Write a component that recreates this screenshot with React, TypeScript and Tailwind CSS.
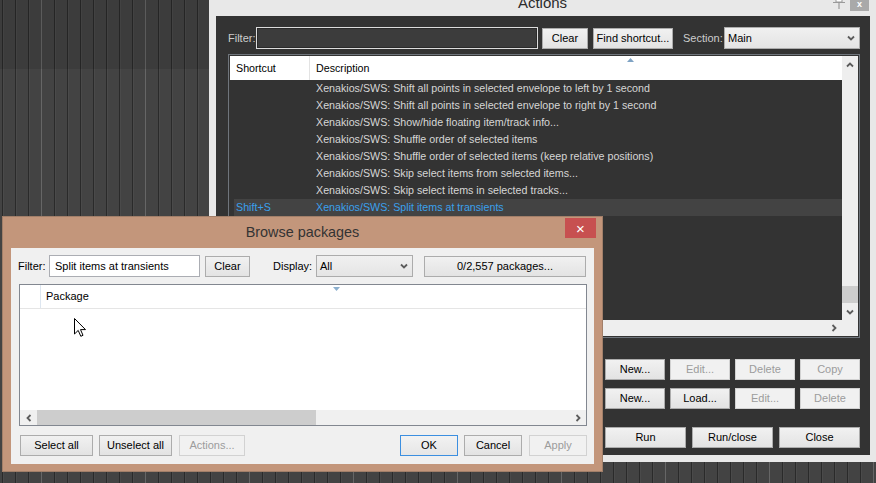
import React from 'react';

// Two overlapping windows over a REAPER arrange view: "Actions" (dark) and "Browse packages".

const columns = Array.from({ length: 68 }, (_, i) => i);

const actionRows = [
    { key: '', text: 'Xenakios/SWS: Shift all points in selected envelope to left by 1 second' },
    { key: '', text: 'Xenakios/SWS: Shift all points in selected envelope to right by 1 second' },
    { key: '', text: 'Xenakios/SWS: Show/hide floating item/track info...' },
    { key: '', text: 'Xenakios/SWS: Shuffle order of selected items' },
    { key: '', text: 'Xenakios/SWS: Shuffle order of selected items (keep relative positions)' },
    { key: '', text: 'Xenakios/SWS: Skip select items from selected items...' },
    { key: '', text: 'Xenakios/SWS: Skip select items in selected tracks...' },
    { key: 'Shift+S', text: 'Xenakios/SWS: Split items at transients', selected: true },
];

function Chevron({ dir }: { dir: 'up' | 'down' | 'left' | 'right' }) {
    const d = {
        up: 'M1 5.5 L4 2.5 L7 5.5',
        down: 'M1 2.5 L4 5.5 L7 2.5',
        left: 'M5.5 1 L2.5 4 L5.5 7',
        right: 'M2.5 1 L5.5 4 L2.5 7',
    }[dir];
    return (
        <svg width="8" height="8" viewBox="0 0 8 8">
            <path d={d} fill="none" stroke="#5c5c5c" strokeWidth="1.8" />
        </svg>
    );
}

function Btn({
    label,
    className = '',
    disabled,
    focus,
}: {
    label: string;
    className?: string;
    disabled?: boolean;
    focus?: boolean;
}) {
    const look = disabled
        ? 'border-[#d2d2d2] bg-[#f1f1f1] text-[#9c9c9c]'
        : focus
          ? 'border-[#3c8fe0] bg-linear-to-b from-[#f2f2f2] to-[#e6e6e6] text-black'
          : 'border-[#acacac] bg-linear-to-b from-[#f1f1f1] to-[#e3e3e3] text-black';
    return (
        <div className={`flex h-[21px] shrink-0 items-center justify-center border text-[11px] ${look} ${className}`}>
            {label}
        </div>
    );
}

function Arrange() {
    return (
        <div className="absolute inset-0 flex pl-[2px]">
            {columns.map((i) => (
                <div
                    key={i}
                    className={
                        i % 8 === 3
                            ? 'h-full w-[13px] shrink-0 border-l border-[#666666]'
                            : 'h-full w-[13px] shrink-0 border-l border-[#2a2a2a] shadow-[inset_1px_0_0_#4a4a4a]'
                    }
                />
            ))}
            <div className="absolute left-0 top-0 h-[69px] w-full bg-black/10" />
        </div>
    );
}

function ActionsWindow() {
    return (
        <div className="absolute left-[209px] top-0 flex h-[462px] w-[667px] flex-col bg-[#e8e8e8]">
            {/* ─── Title strip (mostly off screen) ─── */}
            <div className="relative h-[16px] shrink-0">
                <div className="absolute left-0 top-[-5px] w-full text-center text-[15px] leading-[15px] text-[#2b2b2b]">
                    Actions
                </div>
                <svg className="absolute left-[623px] top-0" width="14" height="10" viewBox="0 0 14 10">
                    <rect x="4" y="-3" width="6" height="5" fill="#ffffff" stroke="#9a9a9a" />
                    <line x1="1" y1="2.5" x2="13" y2="2.5" stroke="#9a9a9a" strokeWidth="1" />
                    <line x1="7" y1="2.5" x2="7" y2="9" stroke="#8a8a8a" strokeWidth="1" />
                </svg>
                <div className="absolute left-[641px] top-0 flex h-[11px] w-[19px] items-start justify-center bg-[#a9a9a9] text-[9px] leading-[8px] font-bold text-white">
                    x
                </div>
            </div>

            {/* ─── Dark client ─── */}
            <div className="mb-[7px] ml-[7px] mr-[6px] flex flex-1 flex-col bg-[#333333] pl-[12px] pr-[10px] pt-[11px]">
                <div className="flex h-[22px] items-end text-[11px]">
                    <span className="w-[28px] self-center text-[#cdcdcd]">Filter:</span>
                    <div className="h-[22px] w-[282px] border border-[#dcdcdc] bg-[#3c3c3c] shadow-[inset_0_0_0_1px_#2a2a2a]" />
                    <Btn label="Clear" className="ml-[4px] w-[46px]" />
                    <Btn label="Find shortcut..." className="ml-[5px] w-[80px]" />
                    <span className="ml-[10px] w-[41px] self-center text-[#cdcdcd]">Section:</span>
                    <div className="flex h-[22px] w-[136px] items-center justify-between border border-[#acacac] bg-linear-to-b from-[#f0f0f0] to-[#e4e4e4] pl-[3px] pr-[4px] text-black">
                        <span>Main</span>
                        <Chevron dir="down" />
                    </div>
                </div>

                {/* list */}
                <div className="mt-[5px] flex h-[284px] w-[632px] border border-[#6f757c] p-px">
                    <div className="flex w-[612px] flex-col">
                        <div className="relative flex h-[24px] shrink-0 bg-white text-[10.7px] text-black">
                            <div className="flex w-[80px] items-center border-r border-[#e3e3e3] pl-[6px]">Shortcut</div>
                            <div className="flex flex-1 items-center pl-[6px]">Description</div>
                            <svg className="absolute left-[397px] top-[2px]" width="7" height="4" viewBox="0 0 7 4">
                                <path d="M0 4 L3.5 0 L7 4 Z" fill="#7fa3c4" />
                            </svg>
                        </div>
                        {actionRows.map((r) => (
                            <div
                                key={r.text}
                                className={
                                    r.selected
                                        ? 'ml-[4px] flex h-[17px] items-center bg-[#434343] text-[10.7px] text-[#3aa0ec]'
                                        : 'ml-[4px] flex h-[17px] items-center text-[10.7px] text-[#d6d6d6]'
                                }
                            >
                                <span className="w-[82px] pl-[2px]">{r.key}</span>
                                <span className="whitespace-nowrap">{r.text}</span>
                            </div>
                        ))}
                        <div className="flex-1" />
                        <div className="flex h-[16px] shrink-0 items-center justify-end bg-[#eeeeee] pr-[4px]">
                            <Chevron dir="right" />
                        </div>
                    </div>
                    <div className="flex w-[16px] flex-col bg-[#eeeeee]">
                        <div className="flex h-[17px] items-center justify-center">
                            <Chevron dir="up" />
                        </div>
                        <div className="flex flex-1 flex-col justify-end">
                            <div className="h-[17px] bg-[#cdcdcd]" />
                        </div>
                        <div className="flex h-[17px] items-center justify-center">
                            <Chevron dir="down" />
                        </div>
                        <div className="h-[16px]" />
                    </div>
                </div>

                {/* buttons */}
                <div className="mt-[21px] flex justify-end gap-[5px]">
                    <Btn label="New..." className="w-[60px]" />
                    <Btn label="Edit..." className="w-[60px]" disabled />
                    <Btn label="Delete" className="w-[60px]" disabled />
                    <Btn label="Copy" className="w-[60px]" disabled />
                </div>
                <div className="mt-[8px] flex justify-end gap-[5px]">
                    <Btn label="New..." className="w-[60px]" />
                    <Btn label="Load..." className="w-[60px]" />
                    <Btn label="Edit..." className="w-[60px]" disabled />
                    <Btn label="Delete" className="w-[60px]" disabled />
                </div>
                <div className="mt-[18px] flex justify-end gap-[6px]">
                    <Btn label="Run" className="w-[81px]" />
                    <Btn label="Run/close" className="w-[81px]" />
                    <Btn label="Close" className="w-[81px]" />
                </div>
            </div>
        </div>
    );
}

function BrowsePackages() {
    return (
        <div className="absolute left-[2px] top-[216px] flex h-[256px] w-[601px] flex-col border border-[#a27f69] bg-[#c3967b]">
            <div className="relative flex h-[31px] shrink-0 items-center justify-center text-[14.4px] text-[#333333]">
                Browse packages
                <div className="absolute right-[6px] top-[1px] flex h-[20px] w-[31px] items-center justify-center bg-[#c75050] text-[15px] leading-none text-white">
                    ×
                </div>
            </div>

            <div className="mb-[7px] ml-[8px] mr-[8px] flex flex-1 flex-col bg-[#f0f0f0] text-[11px] text-black">
                <div className="mt-[7px] flex h-[22px] items-end pl-[7px]">
                    <span className="w-[31px] self-center">Filter:</span>
                    <div className="flex h-[22px] w-[151px] items-center border border-[#abadb3] bg-white px-[5px]">
                        Split items at transients
                    </div>
                    <Btn label="Clear" className="ml-[5px] w-[45px]" />
                    <span className="ml-[23px] w-[43px] self-center">Display:</span>
                    <div className="flex h-[22px] w-[97px] items-center justify-between border border-[#acacac] bg-linear-to-b from-[#f0f0f0] to-[#e5e5e5] pl-[3px] pr-[4px]">
                        <span>All</span>
                        <Chevron dir="down" />
                    </div>
                    <Btn label="0/2,557 packages..." className="ml-[11px] w-[162px]" />
                </div>

                <div className="ml-[8px] mt-[7px] flex h-[142px] w-[568px] flex-col border border-[#828790] bg-white">
                    <div className="relative flex h-[24px] shrink-0 border-b border-[#e5e5e5]">
                        <div className="w-[21px] border-r border-[#dde6f0]" />
                        <div className="flex items-center pl-[5px]">Package</div>
                        <svg className="absolute left-[313px] top-[2px]" width="7" height="4" viewBox="0 0 7 4">
                            <path d="M0 0 L3.5 4 L7 0 Z" fill="#8cb0cf" />
                        </svg>
                    </div>
                    <div className="flex-1" />
                    <div className="flex h-[15px] shrink-0 bg-[#f0f0f0]">
                        <div className="flex w-[17px] items-center justify-center">
                            <Chevron dir="left" />
                        </div>
                        <div className="w-[279px] bg-[#cdcdcd]" />
                        <div className="flex-1" />
                        <div className="flex w-[17px] items-center justify-center">
                            <Chevron dir="right" />
                        </div>
                    </div>
                </div>

                <div className="mt-[9px] flex pl-[9px] pr-[7px]">
                    <Btn label="Select all" className="w-[73px]" />
                    <Btn label="Unselect all" className="ml-[6px] w-[73px]" />
                    <Btn label="Actions..." className="ml-[7px] w-[66px]" disabled />
                    <div className="flex-1" />
                    <Btn label="OK" className="w-[58px]" focus />
                    <Btn label="Cancel" className="ml-[6px] w-[58px]" />
                    <Btn label="Apply" className="ml-[7px] w-[58px]" disabled />
                </div>
            </div>
        </div>
    );
}

export default function App() {
    return (
        <div className="relative h-[483px] w-[876px] overflow-hidden bg-[#434343] font-['Liberation_Sans',Arial,sans-serif]">
            <Arrange />
            <ActionsWindow />
            <BrowsePackages />

            {/* mouse pointer */}
            <svg className="absolute left-[74px] top-[318px]" width="13" height="20" viewBox="0 0 13 20">
                <path
                    d="M0.5 0.5 L0.5 16 L4.2 12.4 L6.8 18.3 L9 17.3 L6.5 11.6 L11.5 11.6 Z"
                    fill="#ffffff"
                    stroke="#000000"
                    strokeWidth="1"
                />
            </svg>
        </div>
    );
}
